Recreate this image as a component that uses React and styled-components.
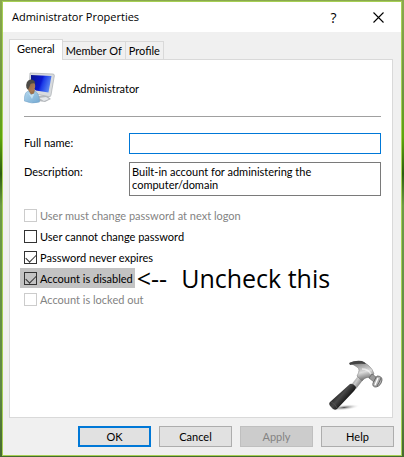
import React, { useState } from "react";
import styled, { createGlobalStyle } from "styled-components";

const checks = [
  { id: "mustChange", label: "User must change password at next logon", disabled: true },
  { id: "cannotChange", label: "User cannot change password" },
  { id: "neverExpires", label: "Password never expires" },
  { id: "disabled", label: "Account is disabled", marked: true, note: ["<--", "Uncheck this"] },
  { id: "locked", label: "Account is locked out", disabled: true },
];

const tabs = ["General", "Member Of", "Profile"];

export default function App() {
  const [tab, setTab] = useState("General");
  const [values, setValues] = useState({ neverExpires: true, disabled: true });

  const toggle = (id) => setValues({ ...values, [id]: !values[id] });

  return (
    <Desktop>
      <GlobalStyle />
      <Dialog>
        <TitleBar>
          <Title>Administrator Properties</Title>
          <TitleButton type="button" aria-label="Help on item">?</TitleButton>
          <TitleButton type="button" aria-label="Close">
            <CloseIcon />
          </TitleButton>
        </TitleBar>
        <Body>
          <Tabs role="tablist">
            {tabs.map((name) => (
              <Tab
                key={name}
                type="button"
                role="tab"
                aria-selected={tab === name}
                $active={tab === name}
                onClick={() => setTab(name)}
              >
                {name}
              </Tab>
            ))}
          </Tabs>
          <Panel role="tabpanel">
            <Account>
              <UserIcon />
              <span>Administrator</span>
            </Account>
            <Field>
              <label htmlFor="fullName">Full name:</label>
              <TextInput id="fullName" type="text" />
            </Field>
            <Field>
              <label htmlFor="description">Description:</label>
              <TextArea
                id="description"
                defaultValue="Built-in account for administering the computer/domain"
              />
            </Field>
            <CheckList>
              {checks.map((c) => (
                <CheckRow key={c.id}>
                  <CheckLabel $marked={c.marked} $disabled={c.disabled}>
                    <CheckBox
                      type="checkbox"
                      disabled={c.disabled}
                      checked={!!values[c.id]}
                      onChange={() => toggle(c.id)}
                    />
                    {c.label}
                  </CheckLabel>
                  {c.note && (
                    <Note>
                      <span>{c.note[0]}</span>
                      <span>{c.note[1]}</span>
                    </Note>
                  )}
                </CheckRow>
              ))}
            </CheckList>
            <Corner>
              <HammerIcon />
            </Corner>
          </Panel>
          <Footer>
            <Button type="button" $primary>OK</Button>
            <Button type="button">Cancel</Button>
            <Button type="button" disabled>Apply</Button>
            <Button type="button">Help</Button>
          </Footer>
        </Body>
      </Dialog>
    </Desktop>
  );
}

function CloseIcon() {
  return (
    <svg width="11" height="11" viewBox="0 0 11 11" aria-hidden="true">
      <path d="M0.5 0.5L10.5 10.5M10.5 0.5L0.5 10.5" stroke="#000" strokeWidth="1.1" />
    </svg>
  );
}

function UserIcon() {
  return (
    <svg width="32" height="32" viewBox="0 0 32 32" aria-hidden="true">
      <defs>
        <linearGradient id="screen" x1="0" y1="0.2" x2="1" y2="0.5">
          <stop offset="0" stopColor="#0a1490" />
          <stop offset="0.5" stopColor="#0a18d0" />
          <stop offset="0.6" stopColor="#1c3ce8" />
          <stop offset="1" stopColor="#5f8ef2" />
        </linearGradient>
        <linearGradient id="shirt" x1="0" y1="0" x2="1" y2="1">
          <stop offset="0" stopColor="#b4d8ee" />
          <stop offset="1" stopColor="#74a9d2" />
        </linearGradient>
        <linearGradient id="face" x1="0" y1="0" x2="1" y2="1">
          <stop offset="0" stopColor="#7d6147" />
          <stop offset="1" stopColor="#b98358" />
        </linearGradient>
      </defs>
      <path d="M14 24L22 23L27 27L21 30L14 29Z" fill="#b4b8bc" />
      <path d="M15 26L22 25L25 27L20 29Z" fill="#e4e7ea" />
      <path d="M6 1L29 2Q30.500 2 30.300 4L27 23Q26.800 25 25 24.700L12 22L5 18Z" fill="#d8dbde" stroke="#a9adb1" strokeWidth="0.7" />
      <path d="M7 3L27.500 4L24.500 20.500L12 18.500L7 15Z" fill="url(#screen)" />
      <path d="M0.400 29Q0 20 4.500 19L11 19Q15.500 21.500 15.500 30Q8 32.500 0.400 29Z" fill="url(#shirt)" stroke="#6e9fc4" strokeWidth="0.5" />
      <path d="M4.500 18.500L7 22.500L10 21.500L11 17.500Z" fill="#9c6f4c" />
      <ellipse cx="7" cy="14" rx="4.200" ry="5.800" fill="url(#face)" />
      <path d="M2.500 16Q1.200 8.500 6.500 7.500Q11 7.500 11.200 11.500Q8 11 6.500 12Q5 16 4 17.500Z" fill="#4c4a46" />
      <path d="M4 20.500L7 23L10.500 21.500L8 27Z" fill="#d8effb" opacity="0.7" />
    </svg>
  );
}

function HammerIcon() {
  return (
    <svg width="56" height="52" viewBox="0 0 56 52" aria-hidden="true">
      <defs>
        <linearGradient id="steel" x1="0" y1="0" x2="0.3" y2="1">
          <stop offset="0" stopColor="#606060" />
          <stop offset="0.35" stopColor="#a9a9a9" />
          <stop offset="0.65" stopColor="#dcdcdc" />
          <stop offset="1" stopColor="#7a7a7a" />
        </linearGradient>
        <linearGradient id="neck" x1="0" y1="0" x2="1" y2="0.7">
          <stop offset="0" stopColor="#666" />
          <stop offset="0.5" stopColor="#ccc" />
          <stop offset="1" stopColor="#555" />
        </linearGradient>
        <linearGradient id="grip" x1="0" y1="0" x2="1" y2="0.8">
          <stop offset="0.2" stopColor="#111" />
          <stop offset="0.5" stopColor="#484848" />
          <stop offset="0.7" stopColor="#161616" />
        </linearGradient>
        <radialGradient id="shade">
          <stop offset="0" stopColor="#555" />
          <stop offset="1" stopColor="#fff" stopOpacity="0" />
        </radialGradient>
      </defs>
      <ellipse cx="16" cy="47.500" rx="16" ry="3" fill="url(#shade)" transform="rotate(-6 16 47)" />
      <path d="M30 16L35 20L28 29L23 25Z" fill="url(#neck)" />
      <path d="M22 24Q25 23 28 27Q28 29 26 31L9 49Q6 51 3 47Q0 44 2 42Z" fill="url(#grip)" />
      <path d="M3 42Q7 43 9 48" stroke="#555" strokeWidth="0.8" fill="none" />
      <path d="M22 3Q33 -1 40 5Q45 9 46 14L42 18Q38 16 34 21L29 16Q33 9 29 7Q26 5 22 3Z" fill="url(#steel)" stroke="#777" strokeWidth="0.5" />
      <path d="M21 3Q27 0 34 1Q37 2 38 4Q31 3 22 5Z" fill="#444" />
      <path d="M34 9Q40 9 43 14" stroke="#fff" strokeWidth="1.600" fill="none" opacity="0.6" />
      <path d="M44 14L48 17L46 22L41 18Z" fill="#999" stroke="#555" strokeWidth="0.6" />
      <path d="M49 16Q54 16 54 20Q53 26 48 27Q44 27 45 23Z" fill="#b0b0b0" stroke="#555" strokeWidth="0.8" />
      <path d="M50 18L47 25" stroke="#fff" strokeWidth="1.300" />
      <path d="M53 18Q51 23 49 26" stroke="#666" strokeWidth="1" fill="none" />
    </svg>
  );
}

const GlobalStyle = createGlobalStyle`
  * {
    box-sizing: border-box;
  }
  body {
    margin: 0;
    font-family: Lato, "Liberation Sans", sans-serif;
    font-size: 11px;
    line-height: 13px;
    color: #000;
  }
  button, input, textarea {
    font: inherit;
    color: inherit;
  }
`;

const Desktop = styled.div`
  display: flex;
  min-height: 100vh;
  padding: 1px 2px;
  background: linear-gradient(#8aa84e, #6d9440 20%, #5da60b 30%, #2c5c10 38%, #6d9a46 45%, #5f8745 85%, #45692f);
`;

const Dialog = styled.div`
  flex: 1;
  display: flex;
  flex-direction: column;
  border: 1px solid #a6cf54;
  background: #f0f0f0;
`;

const TitleBar = styled.header`
  display: flex;
  align-items: center;
  height: 30px;
  padding-left: 9px;
  background: #fff;
`;

const Title = styled.h1`
  flex: 1;
  margin: 0;
  font-family: "Open Sans", sans-serif;
  font-size: 11px;
  font-weight: 400;
  line-height: 16px;
`;

const TitleButton = styled.button`
  display: flex;
  align-items: center;
  justify-content: center;
  width: 45px;
  height: 30px;
  padding: 0;
  border: 0;
  background: none;
  font-family: "Open Sans", sans-serif;
  font-size: 14px;
`;

const Body = styled.div`
  flex: 1;
  display: flex;
  flex-direction: column;
  padding: 7px 7px 8px 6px;
`;

const Tabs = styled.div`
  display: flex;
  align-items: flex-end;
`;

const Tab = styled.button`
  position: relative;
  z-index: ${(p) => (p.$active ? 1 : 0)};
  height: ${(p) => (p.$active ? 21 : 18)}px;
  margin-bottom: ${(p) => (p.$active ? -1 : 0)}px;
  padding: ${(p) => (p.$active ? "0 7px 3px" : "0 3px")};
  border: 1px solid #d9d9d9;
  border-bottom: 0;
  background: ${(p) => (p.$active ? "#fff" : "#f0f0f0")};

  & + & {
    border-left: 0;
  }
`;

const Panel = styled.section`
  flex: 1;
  display: flex;
  flex-direction: column;
  margin-right: 1px;
  padding: 12px 11px 5px 14px;
  border: 1px solid #d9d9d9;
  background: #fff;
`;

const Account = styled.div`
  display: flex;
  align-items: center;
  gap: 17px;
  padding-bottom: 12px;
  margin-bottom: 16px;
  border-bottom: 1px solid #a0a0a0;
`;

const Field = styled.div`
  display: grid;
  grid-template-columns: 105px 1fr;
  margin-bottom: 8px;

  label {
    padding-top: 3px;
  }
`;

const TextInput = styled.input`
  width: 100%;
  height: 21px;
  padding: 0 2px;
  border: 1px solid #0078d7;
  outline: 0;
`;

const TextArea = styled.textarea`
  display: block;
  width: 100%;
  height: 34px;
  padding: 2px;
  border: 1px solid #7a7a7a;
  outline: 0;
  resize: none;
  overflow: hidden;
`;

const CheckList = styled.div`
  display: flex;
  flex-direction: column;
  gap: 1px;
  padding-top: 1px;
`;

const CheckRow = styled.div`
  display: flex;
  align-items: center;
  height: 20px;
`;

const CheckLabel = styled.label`
  display: flex;
  align-items: center;
  gap: 3px;
  height: 20px;
  margin-left: -4px;
  padding: 0 2px 0 4px;
  white-space: nowrap;
  color: ${(p) => (p.$disabled ? "#838383" : "#000")};
  background: ${(p) => (p.$marked ? "#c3c3c3" : "none")};
`;

const CheckBox = styled.input`
  appearance: none;
  display: flex;
  justify-content: center;
  width: 13px;
  height: 13px;
  margin: 0;
  border: 1px solid #333;

  &:disabled {
    border-color: #ccc;
  }

  &:checked::after {
    content: "";
    width: 5px;
    height: 9px;
    border: solid #333;
    border-width: 0 1px 1px 0;
    transform: rotate(45deg);
  }
`;

const Note = styled.strong`
  display: flex;
  gap: 14px;
  margin-left: 2px;
  white-space: nowrap;
  font-family: "Open Sans", sans-serif;
  font-size: 25px;
  font-weight: 400;
  line-height: 30px;
`;

const Corner = styled.div`
  display: flex;
  justify-content: flex-end;
  margin-top: auto;
  margin-right: -3px;
`;

const Footer = styled.footer`
  display: flex;
  justify-content: flex-end;
  gap: 8px;
  padding-top: 8px;
`;

const Button = styled.button`
  width: 73px;
  height: 21px;
  padding: 0;
  border: ${(p) => (p.$primary ? "2px solid #0078d7" : "1px solid #adadad")};
  background: #e1e1e1;

  &:disabled {
    border-color: #bfbfbf;
    background: #ccc;
    color: #838383;
  }
`;
